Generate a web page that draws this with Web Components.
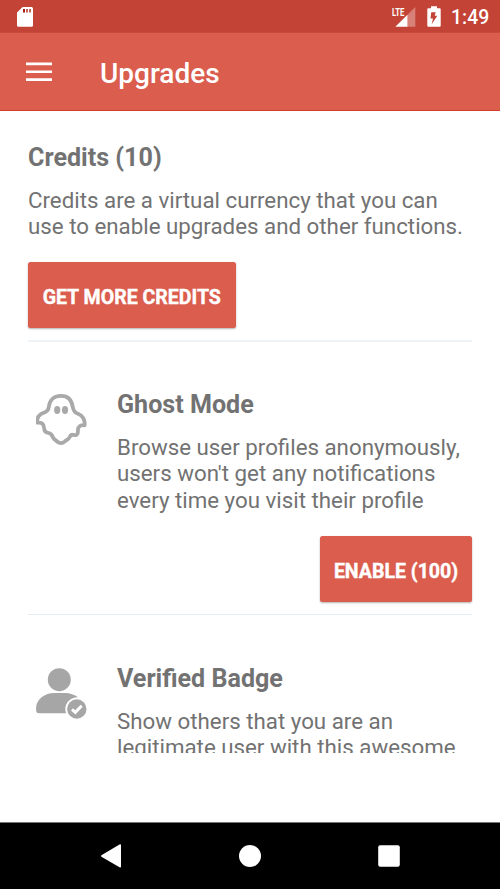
<!DOCTYPE html>
<html lang="en">
<head>
<meta charset="utf-8">
<title>Upgrades</title>
<style>
html,body{margin:0;height:100%;background:#fff}
body{font-family:Roboto,sans-serif;color:#727272;overflow:hidden}
</style>
</head>
<body>
<upgrades-screen></upgrades-screen>
<script>
const define = (name, html) => customElements.define(name, class extends HTMLElement {
  constructor() {
    super();
    const t = document.createElement('template');
    t.innerHTML = html;
    this.attachShadow({mode: 'open'}).append(t.content.cloneNode(true));
  }
});

define('status-bar', `
<style>
:host{display:flex;align-items:center;box-sizing:border-box;height:33px;padding:0 11px 0 17px;background:#c34436;color:#fff;border-bottom:1px solid #c84a3b}
svg{display:block;flex:none}
.space{flex:1}
.clock{font-size:19.4px;font-weight:500;line-height:24px;margin:3px 0 0 10px;width:38px;white-space:nowrap}
.net{display:flex;position:relative;width:26px;height:33px;margin-right:10px}
.lte{position:absolute;left:.5px;top:6px;font-size:11.500px;line-height:12px;font-weight:700;transform:scaleX(.67);transform-origin:0 0}
</style>
<svg width="16" height="33" viewBox="0 0 16 33"><path fill="#fff" d="M5.6 7H14.5Q16 7 16 8.500V25.300Q16 26.800 14.500 26.800H1.500Q0 26.800 0 25.300V12.600Z"/><path fill="#a81c10" d="M6 9h2v3.500H6z"/><path fill="#c8665b" d="M9 9h2v3.500H9zM12 9h2v3.500h-2z"/></svg>
<div class="space"></div>
<div class="net"><svg width="26" height="33" viewBox="0 0 26 33"><path fill="#d88178" d="M24.300 7V26.800H16.500V14.700Z"/><path fill="#fff" d="M16.500 14.700V26.800H4.300Z"/></svg><span class="lte">LTE</span></div>
<svg width="14" height="33" viewBox="0 0 14 33"><path fill="#fff" d="M4 6.300H10V8.200H12.700Q13.700 8.200 13.700 9.200V25.800Q13.700 26.800 12.700 26.800H1.300Q.3 26.800 .3 25.800V9.200Q.3 8.200 1.300 8.200H4Z"/><path fill="#c34436" d="M4.200 12.200H8.700L7.700 15.700H10.300L4.700 24.300L6 18.500H3.500Z"/></svg>
<span class="clock">1:49</span>`);

define('app-bar', `
<style>
:host{display:flex;align-items:center;box-sizing:border-box;height:78px;padding:0 26px;background:#da5d4d;color:#fff;border-bottom:1px solid #d33f29}
svg{display:block}
.title{font-size:28px;font-weight:500;line-height:34px;margin:5px 0 0 48px}
</style>
<svg width="26" height="20" viewBox="0 0 26 20"><path fill="#fff" d="M0 .4H26V3.200H0zM0 8.400H26V11.100H0zM0 16.300H26V19.100H0z"/></svg>
<div class="title"><slot></slot></div>`);

define('action-button', `
<style>
:host{display:flex;align-items:center;justify-content:center;box-sizing:border-box;height:66px;padding-top:4px;border-radius:2.500px;background:#da5d4d;color:#fff;font-size:19.550px;font-weight:700;-webkit-text-stroke:.4px #fff;white-space:nowrap;box-shadow:0 1px 2px rgba(0,0,0,.3)}
</style><slot></slot>`);

define('copy-block', `
<style>
:host{display:block}
.title{font-size:25.100px;font-weight:700;line-height:30px}
.text{margin-top:14px;font-size:22.300px;line-height:26.400px;white-space:nowrap}
</style>
<div class="title"><slot name="title"></slot></div>
<div class="text"><slot></slot></div>`);

define('ghost-icon', `
<style>:host{display:block}svg{display:block}</style>
<svg width="52" height="52" viewBox="1 .5 52 52"><path fill="none" stroke="#a9a9a9" stroke-width="3.800" stroke-linejoin="round" d="M26 2.400C18.500 2.400 14.500 7 13.800 13.500C13.400 17.500 11 18.600 8.200 19.500C4 21 1.900 24.800 2.200 29.200C6.500 28.500 8.900 30.500 9.100 34.500C9.300 38 10.500 39.200 13 39.300C16 39.400 16.800 41 17.800 43.500C19 46.500 20.500 46.300 22 48C24.500 50.200 27.500 50.200 29.700 48C31.500 46 33.200 46.700 34.700 43.500C35.700 41.200 37 40.800 39.200 41.500C41.700 42.200 43.200 40.400 42.900 37C42.600 33.200 45.500 31.300 49.600 31.800C50.300 26.500 47.500 22 43.500 20.500C40.700 19.500 38.500 18 37.900 14C37 7.200 33.500 2.400 26 2.400Z"/><ellipse cx="22.200" cy="16.500" rx="3.100" ry="4" fill="#a9a9a9"/><ellipse cx="30" cy="16.500" rx="3.100" ry="4" fill="#a9a9a9"/></svg>`);

define('verified-icon', `
<style>:host{display:block}svg{display:block}</style>
<svg width="52" height="52" viewBox="0 0 52 52"><g fill="#a6a6a6"><circle cx="23.300" cy="11.700" r="11.500"/><path d="M.1 42V39.500C.5 31 9 24.900 18 24.900H29C34 24.900 38.500 26.500 42 29.200C35 29 29.300 34.500 29.300 41Q29.300 43.300 30.100 45.200H3Q.1 45.200 .1 42Z"/><circle cx="40.800" cy="41" r="9.700"/></g><path d="M36 41.300L39.300 44.300L45.700 37.700" fill="none" stroke="#fff" stroke-width="3"/></svg>`);

define('credits-section', `
<style>
:host{display:flex;flex-direction:column;align-items:flex-start;box-sizing:border-box;height:231px;padding-top:31.500px;border-bottom:2px solid #eef3f8}
action-button{width:207.500px;margin-top:22.700px}
</style>
<copy-block><span slot="title">Credits (10)</span>Credits are a virtual currency that you can<br>use to enable upgrades and other functions.</copy-block>
<action-button>GET MORE CREDITS</action-button>`);

define('upgrade-item', `
<style>
:host{display:grid;grid-template-columns:52px 1fr;column-gap:29px;grid-template-rows:auto 1fr;box-sizing:border-box;height:273px;padding:48px 0 0 8px;border-bottom:1px solid #e3ebf3}
.icon{padding-top:4px}
.action{grid-column:1/3;justify-self:end;padding-top:23px}
</style>
<div class="icon"><slot name="icon"></slot></div>
<copy-block><slot name="title" slot="title"></slot><slot></slot></copy-block>
<div class="action"><slot name="action"></slot></div>`);

define('nav-bar', `
<style>
:host{display:flex;align-items:center;justify-content:space-between;box-sizing:border-box;height:66px;padding:0 100px 0 101px;background:#000}
svg{display:block}
</style>
<svg width="21" height="24" viewBox="0 0 21 24"><path fill="#fff" d="M18.500 .5Q20 -.3 20 1.300V22.600Q20 24.200 18.500 23.300L.8 13.100Q-.8 12 .8 11Z"/></svg>
<svg width="23" height="24" viewBox="0 0 23 24"><circle cx="11" cy="12" r="11" fill="#fff"/></svg>
<svg width="22" height="22" viewBox="0 0 22 22"><rect x=".2" y=".3" width="21.600" height="21.500" rx="2" fill="#fff"/></svg>`);

define('upgrades-screen', `
<style>
:host{display:flex;flex-direction:column;height:889px;width:500px;overflow:hidden}
main{height:642px;overflow:hidden;padding:0 28px}
.gap{flex:1;box-sizing:border-box;border-bottom:1px solid #777}
.enable{width:152px}
.last{padding-top:48.700px}
</style>
<status-bar></status-bar>
<app-bar>Upgrades</app-bar>
<main>
<credits-section></credits-section>
<upgrade-item><ghost-icon slot="icon"></ghost-icon><span slot="title">Ghost Mode</span>Browse user profiles anonymously,<br>users won't get any notifications<br>every time you visit their profile<action-button class="enable" slot="action">ENABLE (100)</action-button></upgrade-item>
<upgrade-item class="last"><verified-icon slot="icon"></verified-icon><span slot="title">Verified Badge</span>Show others that you are an<br>legitimate user with this awesome</upgrade-item>
</main>
<div class="gap"></div>
<nav-bar></nav-bar>`);
</script>
</body>
</html>
